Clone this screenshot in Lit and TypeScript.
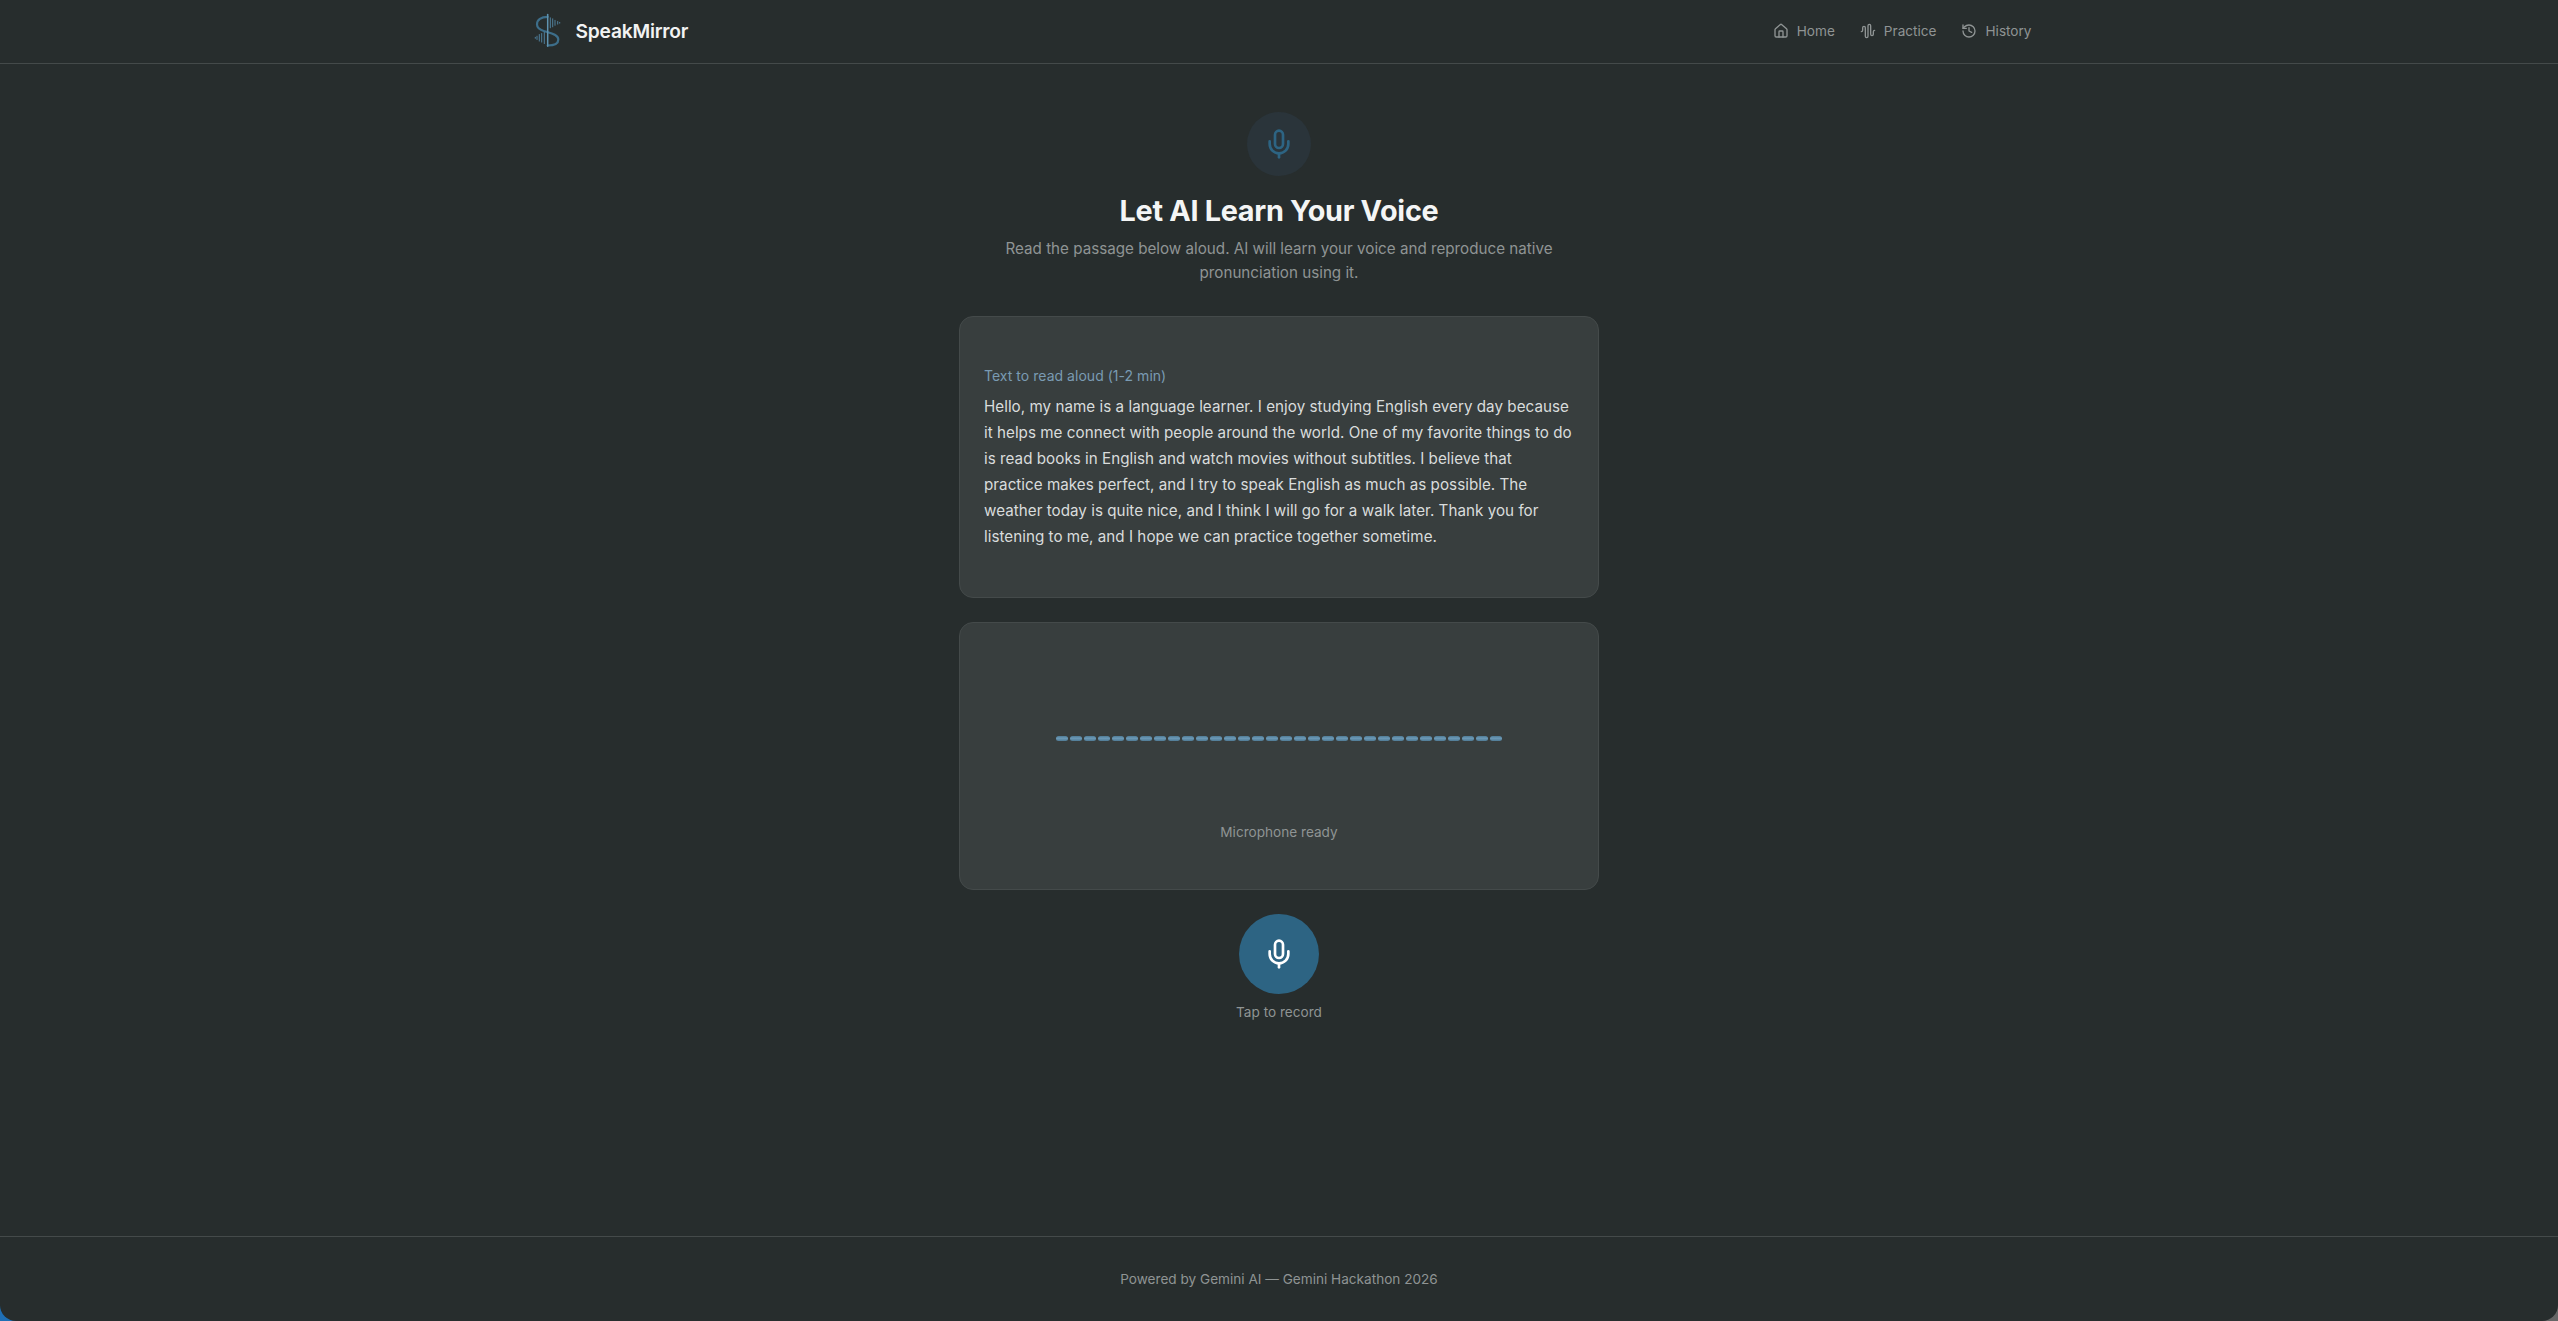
import { LitElement, html, css, svg } from "lit";
import { customElement } from "lit/decorators.js";

const micIcon = svg`<path d="M12 2a3 3 0 0 0-3 3v7a3 3 0 0 0 6 0V5a3 3 0 0 0-3-3Z"/><path d="M19 10v2a7 7 0 0 1-14 0v-2"/><line x1="12" x2="12" y1="19" y2="22"/>`;

@customElement("app-root")
export class AppRoot extends LitElement {
  static styles = css`
    :host {
      display: block;
      height: 1321px;
      overflow: hidden;
      background: linear-gradient(90deg, #1f6fb5 0%, #4a6d84 50%, #666 100%);
      font-family: Inter, "Liberation Sans", sans-serif;
    }
    .shell {
      height: 100%;
      display: flex;
      flex-direction: column;
      background: #272d2d;
      border-radius: 0 0 16px 16px;
      color: #fafafa;
    }
    header {
      height: 63px;
      flex: none;
      border-bottom: 1px solid #444a4a;
      display: flex;
      justify-content: center;
    }
    .bar {
      width: 1504px;
      margin-left: 1px;
      padding-bottom: 1px;
      display: flex;
      align-items: center;
      justify-content: space-between;
    }
    .brand { display: flex; align-items: center; gap: 8px; }
    .brand svg { width: 40px; height: 40px; display: block; }
    .brand span { font-size: 19.2px; font-weight: 600; letter-spacing: -0.2px; color: #f2f3f3; }
    nav { display: flex; gap: 25px; }
    nav a {
      display: flex;
      align-items: center;
      gap: 8px;
      font-size: 13.6px;
      color: #8f9494;
    }
    nav svg {
      width: 16px;
      height: 16px;
      fill: none;
      stroke: currentColor;
      stroke-width: 2;
      stroke-linecap: round;
      stroke-linejoin: round;
    }
    main {
      flex: 1;
      display: flex;
      flex-direction: column;
      align-items: center;
      padding-top: 48px;
    }
    .badge {
      width: 64px;
      height: 64px;
      border-radius: 50%;
      background: #2a343a;
      color: #2d6483;
      display: flex;
      align-items: center;
      justify-content: center;
    }
    .badge svg, .rec svg {
      width: 32px;
      height: 32px;
      fill: none;
      stroke: currentColor;
      stroke-width: 2;
      stroke-linecap: round;
      stroke-linejoin: round;
    }
    h1 {
      margin: 17px 0 0;
      font-size: 28.8px;
      line-height: 36px;
      font-weight: 700;
      letter-spacing: -0.3px;
      color: #f4f5f5;
    }
    .sub {
      margin: 8px 0 0;
      width: 576px;
      text-align: center;
      font-size: 15.2px;
      line-height: 24px;
      color: #8f9494;
    }
    .card {
      width: 640px;
      box-sizing: border-box;
      background: #383e3e;
      border: 1px solid #444a4a;
      border-radius: 14px;
    }
    .text {
      margin-top: 31px;
      height: 282px;
      padding: 49px 24px 0;
    }
    .label {
      font-size: 14px;
      line-height: 20px;
      letter-spacing: 0.03px;
      color: #7a9bb3;
      font-weight: 400;
      margin-bottom: 8px;
    }
    .text p {
      margin: 0;
      font-size: 15.2px;
      line-height: 26px;
      letter-spacing: 0.03px;
      color: #d9dcdc;
    }
    .wave {
      margin-top: 24px;
      height: 268px;
      display: flex;
      flex-direction: column;
      align-items: center;
    }
    .dashes {
      margin-top: 113px;
      display: flex;
      gap: 2px;
    }
    .dashes i {
      width: 12px;
      height: 5px;
      border-radius: 2.5px;
      background: linear-gradient(#4f7a94, #6c9ab8 45%, #4f7a94);
    }
    .status {
      margin-top: 81px;
      font-size: 13.6px;
      line-height: 20px;
      color: #8f9494;
    }
    .rec {
      margin-top: 24px;
      width: 80px;
      height: 80px;
      border-radius: 50%;
      background: #2d6483;
      color: #fff;
      display: flex;
      align-items: center;
      justify-content: center;
    }
    .tap {
      margin-top: 8px;
      font-size: 13.6px;
      line-height: 20px;
      color: #8f9494;
    }
    footer {
      height: 84px;
      flex: none;
      border-top: 1px solid #444a4a;
      display: flex;
      align-items: center;
      justify-content: center;
      font-size: 13.6px;
      color: #8f9494;
    }
  `;

  render() {
    return html`<div class="shell">
      <header>
        <div class="bar">
          <div class="brand">
            <svg viewBox="0 0 40 40" fill="none" stroke-linecap="round">
              <path d="M19.700 5.800C13 5.800 9 9 9 13.500c0 4 3.500 5.500 7.300 6.700 6 1.800 14 3 14 8.300 0 4-4.500 6-10.600 6" stroke="#3d6e8a" stroke-width="2.200"/>
              <line x1="19.700" y1="3.500" x2="19.700" y2="35.200" stroke="#5f93b0" stroke-width="1.500"/>
              <path d="M22.300 6.800v10M24.700 7.800v8M27 9.300v5M29.700 10.500v2.600M31.700 11.400v.8M16.300 21v11.600M13.700 22.500v8.600M11.300 23.500v6.600M9 25.200v3.300M7.300 26.300v1" stroke="#4f7f9b" stroke-width="1"/>
            </svg>
            <span>SpeakMirror</span>
          </div>
          <nav>
            <a><svg viewBox="0 0 24 24"><path d="M15 21v-8a1 1 0 0 0-1-1h-4a1 1 0 0 0-1 1v8"/><path d="M3 10a2 2 0 0 1 .709-1.528l7-5.999a2 2 0 0 1 2.582 0l7 5.999A2 2 0 0 1 21 10v9a2 2 0 0 1-2 2H5a2 2 0 0 1-2-2z"/></svg>Home</a>
            <a><svg viewBox="0 0 24 24"><path d="M2 13a2 2 0 0 0 2-2V7a2 2 0 0 1 4 0v13a2 2 0 0 0 4 0V4a2 2 0 0 1 4 0v13a2 2 0 0 0 4 0v-4a2 2 0 0 1 2-2"/></svg>Practice</a>
            <a><svg viewBox="0 0 24 24"><path d="M3 12a9 9 0 1 0 9-9 9.750 9.750 0 0 0-6.740 2.740L3 8"/><path d="M3 3v5h5"/><path d="M12 7v5l4 2"/></svg>History</a>
          </nav>
        </div>
      </header>
      <main>
        <div class="badge"><svg viewBox="0 0 24 24">${micIcon}</svg></div>
        <h1>Let AI Learn Your Voice</h1>
        <p class="sub">Read the passage below aloud. AI will learn your voice and reproduce native pronunciation using it.</p>
        <section class="card text">
          <div class="label">Text to read aloud (1-2 min)</div>
          <p>Hello, my name is a language learner. I enjoy studying English every day because it helps me connect with people around the world. One of my favorite things to do is read books in English and watch movies without subtitles. I believe that practice makes perfect, and I try to speak English as much as possible. The weather today is quite nice, and I think I will go for a walk later. Thank you for listening to me, and I hope we can practice together sometime.</p>
        </section>
        <section class="card wave">
          <div class="dashes">${Array.from({ length: 32 }, () => html`<i></i>`)}</div>
          <div class="status">Microphone ready</div>
        </section>
        <div class="rec"><svg viewBox="0 0 24 24">${micIcon}</svg></div>
        <div class="tap">Tap to record</div>
      </main>
      <footer>Powered by Gemini AI — Gemini Hackathon 2026</footer>
    </div>`;
  }
}
